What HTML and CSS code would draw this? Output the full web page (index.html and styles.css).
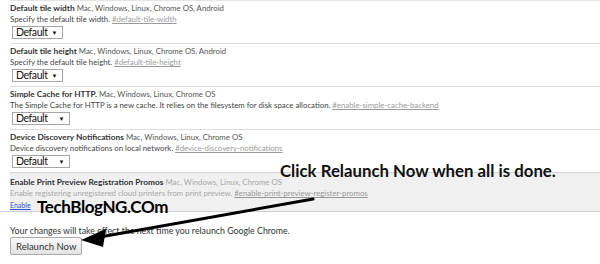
FILE: index.html
```html
<!DOCTYPE html>
<html lang="en">
<head>
    <meta charset="UTF-8">
    <title>Experiments</title>
    <link rel="stylesheet" href="styles.css">
</head>
<body>
    <div class="experiments">
        <div class="experiment">
            <div class="experiment-name"><span class="name">Default tile width</span> <span class="platforms">Mac, Windows, Linux, Chrome OS, Android</span></div>
            <div class="description">Specify the default tile width. <a class="permalink" href="#">#default-tile-width</a></div>
            <div class="select"><span>Default</span><span class="caret">&#9660;</span></div>
        </div>
        <div class="experiment">
            <div class="experiment-name"><span class="name">Default tile height</span> <span class="platforms">Mac, Windows, Linux, Chrome OS, Android</span></div>
            <div class="description">Specify the default tile height. <a class="permalink" href="#">#default-tile-height</a></div>
            <div class="select"><span>Default</span><span class="caret">&#9660;</span></div>
        </div>
        <div class="experiment">
            <div class="experiment-name"><span class="name">Simple Cache for HTTP.</span> <span class="platforms">Mac, Windows, Linux, Chrome OS</span></div>
            <div class="description">The Simple Cache for HTTP is a new cache. It relies on the filesystem for disk space allocation. <a class="permalink" href="#">#enable-simple-cache-backend</a></div>
            <div class="select wide"><span>Default</span><span class="caret">&#9660;</span></div>
        </div>
        <div class="experiment">
            <div class="experiment-name"><span class="name">Device Discovery Notifications</span> <span class="platforms">Mac, Windows, Linux, Chrome OS</span></div>
            <div class="description">Device discovery notifications on local network. <a class="permalink" href="#">#device-discovery-notifications</a></div>
            <div class="select wide"><span>Default</span><span class="caret">&#9660;</span></div>
        </div>
        <div class="experiment disabled">
            <div class="experiment-name"><span class="name">Enable Print Preview Registration Promos</span> <span class="platforms">Mac, Windows, Linux, Chrome OS</span></div>
            <div class="description">Enable registering unregistered cloud printers from print preview. <a class="permalink" href="#">#enable-print-preview-register-promos</a></div>
            <a class="enable-link" href="#">Enable</a>
        </div>
    </div>

    <div class="needs-restart">
        <p>Your changes will take effect the next time you relaunch Google Chrome.</p>
        <button class="relaunch">Relaunch Now</button>
    </div>

    <!-- annotations drawn over the screenshot -->
    <div class="note">Click Relaunch Now when all is done.</div>
    <div class="watermark">TechBlogNG.COm</div>
    <svg class="arrow" width="600" height="264" viewBox="0 0 600 264">
        <line x1="313" y1="199" x2="100" y2="237" stroke="#000" stroke-width="3" stroke-linecap="round"/>
        <polygon points="81,240 106,229 103,247" fill="#000"/>
    </svg>
</body>
</html>
```

FILE: styles.css
```css
body {
    margin: 0;
    background-color: #fff;
    font-family: Lato, "Liberation Sans", sans-serif;
    font-size: 8px;
    color: #333;
    position: relative;
    width: 600px;
    height: 264px;
    overflow: hidden;
}

.experiments {
    border-bottom: 1px solid #c8d0d8;
}

.experiment {
    margin-left: 10px;
    border-top: 1px solid #ddd;
    padding: 1px 0 4px;
}

.experiment:first-child {
    border-top-color: #e4e4e4;
}

.experiment-name {
    line-height: 12px;
    height: 12px;
    white-space: nowrap;
}

.name {
    font-size: 8.3px;
    font-weight: bold;
    color: #333;
}

.platforms {
    font-size: 7.8px;
    color: #555;
}

.description {
    font-size: 7.8px;
    line-height: 11px;
    height: 11px;
    white-space: nowrap;
    color: #444;
}

.permalink {
    color: #9a9a9a;
}

.select {
    display: inline-flex;
    align-items: center;
    gap: 4px;
    margin: 1px 0 0 2px;
    height: 11px;
    padding: 0 4px 0 3px;
    border: 1px solid #a6a6a6;
    font-size: 10.5px;
    letter-spacing: -0.4px;
    line-height: 11px;
    color: #111;
    background-color: #fff;
}

.select.wide {
    gap: 11px;
}

.caret {
    font-size: 6px;
    letter-spacing: 0;
}

.disabled {
    background-color: #f0f0f0;
    padding: 3px 0 3px;
    border-top-color: #d6d6d6;
    height: 32px;
}

.disabled .name {
    color: #333;
}

.disabled .platforms,
.disabled .description {
    color: #a8a8a8;
}

.disabled .permalink {
    color: #999;
}

.enable-link {
    display: block;
    margin-top: 2px;
    font-size: 7px;
    line-height: 9px;
    color: #2a4fd6;
}

.needs-restart {
    margin: 13px 0 0 10px;
}

.needs-restart p {
    margin: 0;
    font-size: 8.8px;
    line-height: 12px;
    color: #333;
}

.relaunch {
    margin-top: 0;
    height: 18px;
    padding: 0 5px;
    font-family: Lato, "Liberation Sans", sans-serif;
    font-size: 9.5px;
    color: #333;
    border: 1px solid #aaa;
    border-radius: 2px;
    background: linear-gradient(#fafafa, #e2e2e2);
}

.note {
    position: absolute;
    left: 280px;
    top: 160px;
    font-size: 16.8px;
    font-weight: bold;
    color: #111;
    white-space: nowrap;
}

.watermark {
    position: absolute;
    left: 37px;
    top: 196px;
    font-size: 17px;
    letter-spacing: -0.4px;
    font-weight: bold;
    color: #000;
    white-space: nowrap;
}

.arrow {
    position: absolute;
    left: 0;
    top: 0;
}
```
